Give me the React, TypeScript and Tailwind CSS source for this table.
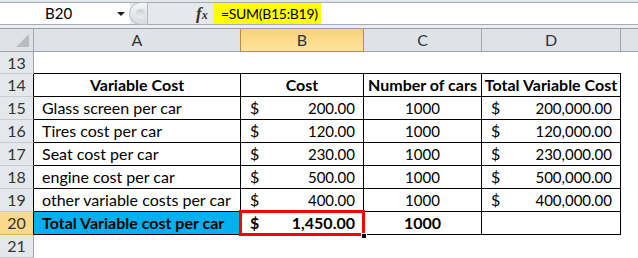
import React from "react";

type Row = { n: number; a?: string; b?: string; c?: string; d?: string; kind: "empty" | "head" | "data" | "total" };

const rows: Row[] = [
  { n: 13, kind: "empty" },
  { n: 14, kind: "head", a: "Variable Cost", b: "Cost", c: "Number of cars", d: "Total Variable Cost" },
  { n: 15, kind: "data", a: "Glass screen per car", b: "200.00", c: "1000", d: "200,000.00" },
  { n: 16, kind: "data", a: "Tires cost per car", b: "120.00", c: "1000", d: "120,000.00" },
  { n: 17, kind: "data", a: "Seat cost per car", b: "230.00", c: "1000", d: "230,000.00" },
  { n: 18, kind: "data", a: "engine cost per car", b: "500.00", c: "1000", d: "500,000.00" },
  { n: 19, kind: "data", a: "other variable costs per car", b: "400.00", c: "1000", d: "400,000.00" },
  { n: 20, kind: "total", a: "Total Variable cost per car", b: "1,450.00", c: "1000" },
  { n: 21, kind: "empty" },
];

function RowHeader({ n, sel, table }: { n: number; sel?: boolean; table?: boolean }) {
  return (
    <div
      className={`w-[34px] shrink-0 flex items-center justify-center border-b border-r ${
        sel ? "bg-[#f9d98a] border-b-[#e0b15a]" : "bg-[#e4e7eb] border-b-[#c8ccd2]"
      } ${table ? "border-r-black" : sel ? "border-r-[#c58b34]" : "border-r-[#9ea4ab]"} text-[#333] text-[16px] font-normal`}
    >
      {n}
    </div>
  );
}

export default function App() {
  return (
    <div className="w-[638px] h-[258px] overflow-hidden bg-white font-['Lato',sans-serif] text-black">
      {/* formula bar */}
      <div className="h-[29px] flex flex-col bg-[#e3e6ea]">
        <div className="h-[2px]" />
        <div className="h-[23px] flex border-y border-[#a7acb3]">
          <div className="w-[130px] bg-white flex items-center relative">
            <span className="ml-[45px] text-[15px] text-black">B20</span>
            <span className="absolute left-[117px] top-[9px] w-0 h-0 border-l-[4px] border-r-[4px] border-t-[4px] border-l-transparent border-r-transparent border-t-[#222]" />
          </div>
          <div className="w-[84px] bg-[#e6e8eb] flex items-center relative">
            <div className="absolute left-[-1px] top-[-1px] w-[19px] h-[23px] rounded-l-full border border-[#b5b9bf] bg-gradient-to-b from-[#f4f5f6] to-[#d8dbe0] flex items-center justify-center">
              <div className="w-[9px] h-[9px] rounded-full bg-gradient-to-b from-[#c9ccd1] to-[#eef0f2] ml-[3px]" />
            </div>
            <span className="ml-[66px] font-['Liberation_Serif',serif] italic font-bold text-[17px] text-[#333] leading-none">
              f<span className="text-[12px]">x</span>
            </span>
          </div>
          <div className="w-[107px] bg-[#ffff00] flex items-center overflow-hidden">
            <span className="ml-[7px] text-[14px] tracking-[-0.3px] whitespace-nowrap">=SUM(B15:B19)</span>
          </div>
          <div className="flex-1 bg-white" />
        </div>
        <div className="h-[3px] bg-[#eceef1]" />
        <div className="h-[1px] bg-[#9aa0a7]" />
      </div>

      {/* column header */}
      <div className="h-[23px] flex text-[16px] text-[#333]">
        <div className="w-[34px] shrink-0 bg-[#dfe2e7] border-r border-b border-[#9ea4ab] relative">
          <div className="absolute right-[4px] bottom-[4px] w-0 h-0" style={{ borderBottom: "13px solid #b9bdc3", borderLeft: "13px solid transparent" }} />
        </div>
        <div className="w-[206px] shrink-0 bg-[#dfe2e7] border-b border-[#9ea4ab] flex items-center justify-center">A</div>
        <div className="w-[124px] shrink-0 bg-gradient-to-b from-[#f9d27a] to-[#fde49a] border-l border-r border-b border-[#c58b34] flex items-center justify-center">B</div>
        <div className="w-[118px] shrink-0 bg-[#dfe2e7] border-r border-b border-[#9ea4ab] flex items-center justify-center">C</div>
        <div className="w-[139px] shrink-0 bg-[#dfe2e7] border-r border-b border-[#9ea4ab] flex items-center justify-center">D</div>
        <div className="flex-1 bg-[#dfe2e7] border-b border-[#9ea4ab]" />
      </div>

      {/* rows */}
      {rows.map((r) => {
        const h = r.n === 13 ? "h-[22px]" : "h-[23px]";
        const inTable = r.kind !== "empty";
        const bold = r.kind === "head" || r.kind === "total";
        const cb = inTable ? "border-b border-r border-black" : "";
        return (
          <div key={r.n} className={`${h} flex ${bold ? "text-[16px] font-bold" : "text-[15px]"}`}>
            <RowHeader n={r.n} sel={r.kind === "total"} table={inTable} />
            {r.n === 13 ? (
              <>
                <div className="w-[207px] shrink-0 border-b border-black" />
                <div className="w-[123px] shrink-0 border-b border-black" />
                <div className="w-[118px] shrink-0 border-b border-black" />
                <div className="w-[139px] shrink-0 border-b border-black" />
                <div className="flex-1" />
              </>
            ) : r.kind === "empty" ? (
              <div className="flex-1" />
            ) : (
              <>
                <div
                  className={`w-[207px] shrink-0 ${cb} flex items-center whitespace-nowrap ${
                    r.kind === "head" ? "justify-center" : "pl-[8px]"
                  } ${r.kind === "total" ? "bg-[#00b0f0]" : ""} ${bold ? "" : "text-[16px]"}`}
                >
                  {r.a}
                </div>
                <div className={`w-[123px] shrink-0 ${cb} flex items-center relative ${r.kind === "head" ? "justify-center" : "justify-between pl-[9px] pr-[8px]"}`}>
                  {r.kind === "head" ? (
                    r.b
                  ) : (
                    <>
                      <span className="text-[16px]">$</span>
                      <span>{r.b}</span>
                    </>
                  )}
                  {r.kind === "total" && (
                    <>
                      <div className="absolute left-[-2px] top-[-2px] w-[126px] h-[26px] border-[3px] border-[#ff0000] pointer-events-none" />
                      <div className="absolute left-[120px] top-[21px] w-[6px] h-[6px] bg-black border border-white" />
                    </>
                  )}
                </div>
                <div className={`w-[118px] shrink-0 ${cb} flex items-center justify-center whitespace-nowrap`}>{r.c}</div>
                <div className={`w-[139px] shrink-0 ${cb} flex items-center whitespace-nowrap ${r.kind === "head" ? "justify-center" : "justify-between pl-[9px] pr-[8px]"}`}>
                  {r.kind === "head" ? r.d : r.kind === "data" ? (
                    <>
                      <span className="text-[16px]">$</span>
                      <span>{r.d}</span>
                    </>
                  ) : null}
                </div>
                <div className="flex-1" />
              </>
            )}
          </div>
        );
      })}
    </div>
  );
}
